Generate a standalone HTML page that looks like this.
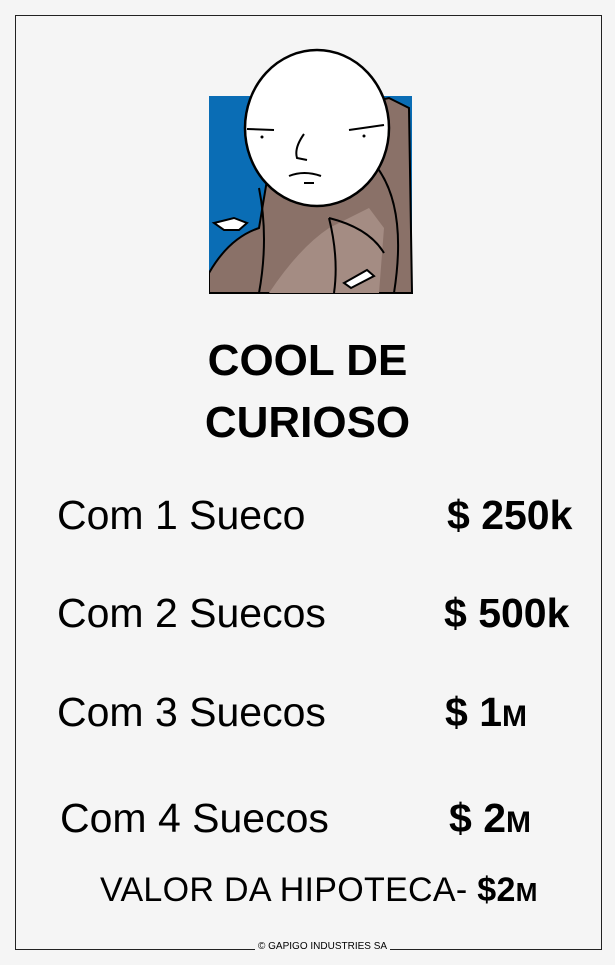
<!DOCTYPE html>
<html><head><meta charset="utf-8"><style>
body{margin:0;width:615px;height:965px;background:#f5f5f5;position:relative;overflow:hidden;font-family:"Liberation Sans",sans-serif;color:#000}
.b{position:absolute;left:15px;top:15px;width:585px;height:934px;border:1px solid #222;border-bottom:none}
.bl{position:absolute;top:949px;height:1px;background:#222}
.t{position:absolute;white-space:nowrap;line-height:1}
.r{font-size:41px}
.p{font-size:41px;font-weight:bold}
.sm{font-size:30px}
</style></head><body>
<div class="b"></div>
<div class="bl" style="left:15px;width:240px"></div>
<div class="bl" style="left:390px;width:211px"></div>
<div class="t" style="left:258px;top:942px;font-size:10px">© GAPIGO INDUSTRIES SA</div>
<svg style="position:absolute;left:209px;top:48px" width="204" height="246" viewBox="0 0 204 246">
<rect x="0" y="48" width="203" height="197" fill="#0a6db5"/>
<path d="M0 245 L0 225 Q20 190 50 180 L60 120 Q70 80 90 70 L180 50 L200 60 L203 245 Z" fill="#8a7168" stroke="#000" stroke-width="2"/>
<path d="M60 245 Q90 200 120 180 L160 160 L175 180 L170 245 Z" fill="#a48c83"/>
<path d="M50 140 Q60 190 50 245 M160 110 Q200 150 185 245 M120 170 Q130 210 125 245 M120 170 Q160 180 175 205" fill="none" stroke="#000" stroke-width="2"/>
<ellipse cx="108" cy="80" rx="72" ry="78" fill="#fff" stroke="#000" stroke-width="2.5"/>
<path d="M38 81 L65 82 M140 82 L175 77 M95 86 Q85 100 88 110 L98 112 M80 128 Q95 122 112 128 M95 135 L105 135" fill="none" stroke="#000" stroke-width="2"/>
<circle cx="53" cy="89" r="1.5"/><circle cx="155" cy="88" r="1.5"/>
<path d="M5 175 L25 170 L38 175 L30 182 L15 182 Z" fill="#fff" stroke="#000" stroke-width="2"/>
<path d="M135 235 L158 222 L165 228 L142 240 Z" fill="#fff" stroke="#000" stroke-width="2"/>
</svg>
<div class="t" style="left:0;width:615px;text-align:center;top:330px;font-size:44px;font-weight:bold;line-height:62px">COOL DE<br>CURIOSO</div>
<div class="t r" style="left:57px;top:495px">Com 1 Sueco</div>
<div class="t p" style="left:447px;top:495px">$ 250k</div>
<div class="t r" style="left:57px;top:593px">Com 2 Suecos</div>
<div class="t p" style="left:444px;top:593px">$ 500k</div>
<div class="t r" style="left:57px;top:692px">Com 3 Suecos</div>
<div class="t p" style="left:445px;top:692px">$ 1<span class="sm">M</span></div>
<div class="t r" style="left:60px;top:798px">Com 4 Suecos</div>
<div class="t p" style="left:449px;top:798px">$ 2<span class="sm">M</span></div>
<div class="t" style="left:100px;top:873px;font-size:34px;letter-spacing:0.3px">VALOR DA HIPOTECA- <b>$2<span style="font-size:26px">M</span></b></div>
</body></html>
